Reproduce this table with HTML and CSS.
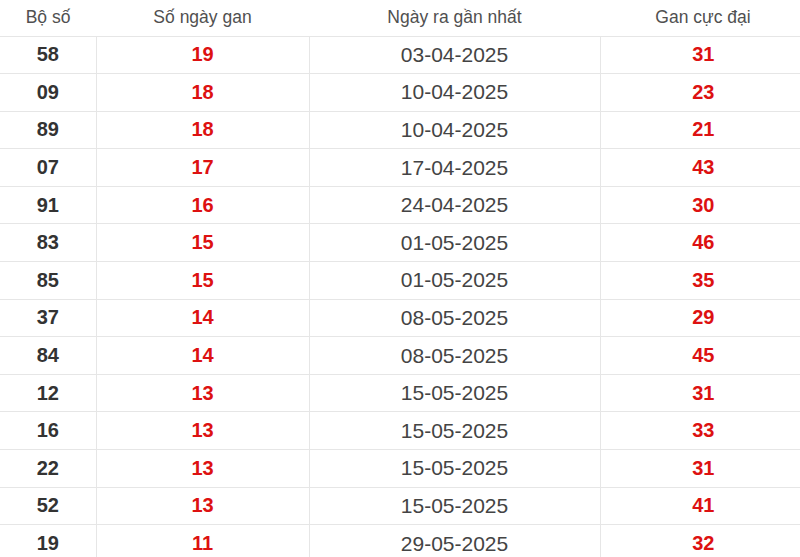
FILE: index.html
```html
<!DOCTYPE html>
<html lang="vi">
<head>
<meta charset="utf-8">
<link rel="stylesheet" href="styles.css">
</head>
<body>
<table class="gan">
<colgroup><col class="c1"><col class="c2"><col class="c3"><col class="c4"></colgroup>
<thead>
<tr><th>Bộ số</th><th>Số ngày gan</th><th>Ngày ra gần nhất</th><th>Gan cực đại</th></tr>
</thead>
<tbody>
<tr><td class="num">58</td><td class="red">19</td><td class="date">03-04-2025</td><td class="red">31</td></tr>
<tr><td class="num">09</td><td class="red">18</td><td class="date">10-04-2025</td><td class="red">23</td></tr>
<tr><td class="num">89</td><td class="red">18</td><td class="date">10-04-2025</td><td class="red">21</td></tr>
<tr><td class="num">07</td><td class="red">17</td><td class="date">17-04-2025</td><td class="red">43</td></tr>
<tr><td class="num">91</td><td class="red">16</td><td class="date">24-04-2025</td><td class="red">30</td></tr>
<tr><td class="num">83</td><td class="red">15</td><td class="date">01-05-2025</td><td class="red">46</td></tr>
<tr><td class="num">85</td><td class="red">15</td><td class="date">01-05-2025</td><td class="red">35</td></tr>
<tr><td class="num">37</td><td class="red">14</td><td class="date">08-05-2025</td><td class="red">29</td></tr>
<tr><td class="num">84</td><td class="red">14</td><td class="date">08-05-2025</td><td class="red">45</td></tr>
<tr><td class="num">12</td><td class="red">13</td><td class="date">15-05-2025</td><td class="red">31</td></tr>
<tr><td class="num">16</td><td class="red">13</td><td class="date">15-05-2025</td><td class="red">33</td></tr>
<tr><td class="num">22</td><td class="red">13</td><td class="date">15-05-2025</td><td class="red">31</td></tr>
<tr><td class="num">52</td><td class="red">13</td><td class="date">15-05-2025</td><td class="red">41</td></tr>
<tr><td class="num">19</td><td class="red">11</td><td class="date">29-05-2025</td><td class="red">32</td></tr>
</tbody>
</table>
</body>
</html>
```
FILE: styles.css
```css
html, body {
  margin: 0;
  padding: 0;
  background: #fff;
}
body {
  font-family: "Liberation Sans", Arial, sans-serif;
  overflow: hidden;
}
.gan {
  width: 806px;
  border-collapse: collapse;
  table-layout: fixed;
}
.c1 { width: 96px; }
.c2 { width: 213px; }
.c3 { width: 291px; }
.c4 { width: 206px; }
.gan th {
  height: 36px;
  padding: 0;
  font-weight: normal;
  font-size: 17.5px;
  color: #505050;
  text-align: center;
  vertical-align: middle;
  border-bottom: 1px solid #e6e6e6;
  box-sizing: border-box;
}
.gan td {
  height: 36.6px;
  padding: 0;
  text-align: center;
  vertical-align: middle;
  border-bottom: 1px solid #e6e6e6;
  border-left: 1px solid #e6e6e6;
}
.gan td:first-child { border-left: none; }
.num {
  font-weight: bold;
  font-size: 20px;
  color: #333;
}
.red {
  font-weight: bold;
  font-size: 20px;
  color: #dd1111;
}
.date {
  font-size: 21px;
  color: #444;
}
```
